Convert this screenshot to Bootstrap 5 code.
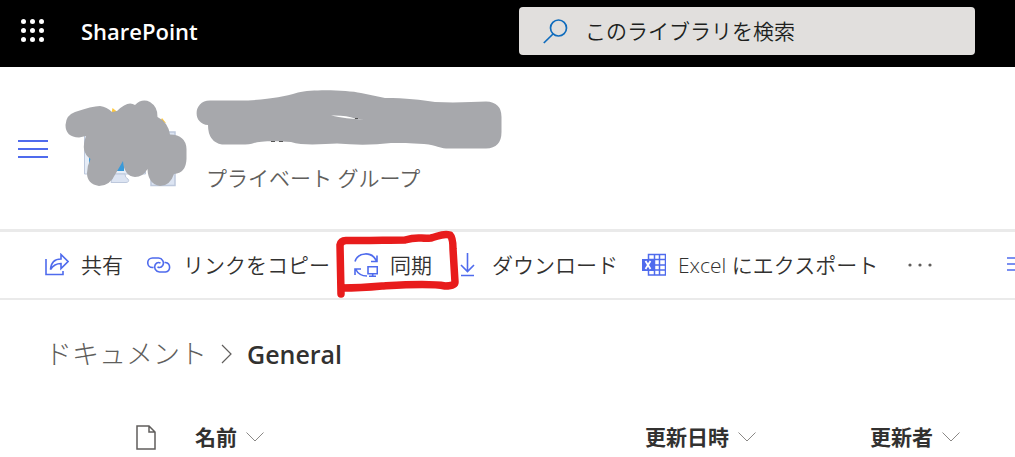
<!DOCTYPE html>
<html lang="ja">
<head>
<meta charset="utf-8">
<meta name="viewport" content="width=device-width, initial-scale=1">
<title>General - SharePoint</title>
<link href="https://cdn.jsdelivr.net/npm/bootstrap@5.3.0/dist/css/bootstrap.min.css" rel="stylesheet">
<style>
  body { font-family: "Open Sans", "Noto Sans CJK JP", sans-serif; font-size: 21px; line-height: 32px; color: #323130; background: #fff; overflow-x: hidden; }
  svg { display: block; flex: none; }
  button { font-weight: 350; }
  .plain { border: 0; padding: 0; background: none; color: inherit; white-space: nowrap; }
  .suite { background: #000; padding: 7px 40px 12px 20px; }
  .suite-name { font-size: 22px; font-weight: 600; color: #fff; margin-left: 36px; }
  .search-box { width: 456px; height: 48px; background: #e1dfdd; border-radius: 4px; padding: 0 24px; gap: 17px; }
  .search-box input { border: 0; background: none; outline: 0; padding: 0; min-width: 0; font-weight: 350; color: #201f1e; }
  .search-box input::placeholder { color: #201f1e; opacity: 1; }
  .site { padding: 21px 18px 35px; border-bottom: 3px solid #eaeaea; }
  .site-menu { margin-top: 52px; }
  .site-type { font-weight: 350; color: #605e5c; padding: 12px 0 0 10px; }
  .site-logo { margin: 10px 8px 0 16px; }
  .commands { height: 68px; padding-left: 45px; gap: 24px; border-bottom: 2px solid #eaeaea; }
  .commands button { display: flex; align-items: center; gap: 12px; flex: none; }
  .line-icon { fill: none; stroke: #4f6bed; stroke-width: 1.6; }
  .pen-box { position: absolute; left: -20px; top: -20px; z-index: 1; pointer-events: none; }
  .view-btn { width: 8px; overflow: hidden; }
  .crumbs { padding: 34px 45px 0; font-size: 27px; line-height: 40px; gap: 13px; }
  .crumbs a { font-weight: 300; color: #605e5c; }
  .crumbs strong { font-size: 25px; font-weight: 600; }
  .files { margin-top: 47px; table-layout: fixed; width: 100%; }
  .files th { padding: 0; font-weight: 700; white-space: nowrap; }
  .files button { font-weight: 700; display: flex; align-items: center; gap: 9px; }
  .col-icon { width: 195px; } .col-title { width: 450px; } .col-date { width: 225px; }
  .col-icon svg { margin-left: 136px; }
</style>
</head>
<body>
<header class="suite d-flex align-items-center">
  <button class="plain" aria-label="アプリ起動ツール">
    <svg width="25" height="25" viewBox="0 0 25 25" fill="#fff"><g id="dots"><circle cx="3.5" cy="2.500" r="2.5"/><circle cx="12.5" cy="2.500" r="2.5"/><circle cx="21.5" cy="2.500" r="2.5"/></g><use href="#dots" y="9"/><use href="#dots" y="18"/></svg>
  </button>
  <a href="#" class="suite-name text-decoration-none">SharePoint</a>
  <label class="search-box d-flex align-items-center ms-auto">
    <svg width="25" height="26" viewBox="0 0 25 26" fill="none" stroke="#0f6cbd" stroke-width="1.7"><circle cx="15.500" cy="10" r="8"/><path d="M10 16 .8 25"/></svg>
    <input type="search" class="flex-grow-1" placeholder="このライブラリを検索" aria-label="このライブラリを検索">
  </label>
</header>

<section class="site d-flex align-items-start">
  <button class="plain site-menu" aria-label="メニュー">
    <svg width="30" height="18" viewBox="0 0 30 18" stroke="#4f6bed" stroke-width="2"><path d="M0 1h30M0 9h30M0 17h30"/></svg>
  </button>
  <svg class="site-logo" width="124" height="92" viewBox="64 98 124 92" aria-hidden="true">
    <path d="M111 116l1.500-8 5 4zM160 122l2-4 4 5z" fill="#ffc83d"/>
    <path d="M84.500 135h61v39h-61z" fill="#e6edf7" stroke="#bdc8dc"/>
    <path d="M89 138h35v33H89z" fill="#3a9ad9"/>
    <path d="M113 174h12q0 4 3 5q2 3-2 3.500h-15z" fill="#dce4f2" stroke="#bdc8dc"/>
    <path d="M151 132h24v53.500h-24z" fill="#dce4f2" stroke="#bdc8dc" stroke-width="1.500"/>
    <path d="M65.500 125Q66 115 75 112Q92 106 100 106Q107 107 112 112L117 111Q128 100 135 105Q142 98 150 102Q158 107 157.500 117Q168 122 170 134.500Q186 135 186.500 149V159Q186 173 174 174Q170 186 160 186Q148 184 147.500 169Q143 177 135 177Q124 176 123 161L116 173Q110 186 99 186Q87 184 87 173Q87 166 90.500 159Q80 152 86 136L79 137.500Q65.500 137 65.500 125Z" fill="#a7a8ac"/>
  </svg>
  <div>
    <svg width="308" height="62" viewBox="195 88 308 62" aria-hidden="true">
      <path d="M209 100.500H247C270 99 282 97 297 92.500C312 89 346 90 360 93L384 98C405 98 420 100 434 102C454 103 472 102 485 101.500Q500.500 102 500.500 117V132Q500.500 148 485 148.500H445C438 148 437 145.500 423 144C409 143 399 143 390 143Q365 146 336 143.500C323 144 302 146 290 142C276 140.500 258 141 253 143Q249 144.500 240 144.500H221Q207 142 207 125C191 124 192 100.500 209 100.500Z" fill="#a7a8ac"/>
      <path d="M330 115.500Q345 115 354 118.500L363 119.500Q345 119 330 115.500Z" fill="#fff"/>
      <path d="M354 118.500h3M270 141.500h4M278 141.500h4" stroke="#555"/>
    </svg>
    <div class="site-type">プライベート グループ</div>
  </div>
</section>

<nav class="commands d-flex align-items-center" aria-label="コマンド">
  <button class="plain"><svg class="line-icon" width="24" height="24" viewBox="0 0 24 24"><path d="M1 6v15.500h17V18"/><path d="M5.500 16.500C6 9.500 10 6 16 6V1.500l7 7-7 7v-5C11 10.500 8 12.500 5.500 16.500Z"/></svg>共有</button>
  <button class="plain"><svg class="line-icon" width="24" height="24" viewBox="0 0 24 24"><path d="M6.500 14.500H5.500a4.700 4.700 0 0 1 0-9.500H11.500a5 5 0 0 1 4.200 7.500c-1.300 2-3.600 2.300-5.200 1.500"/><path d="M17.500 9.500h1a4.800 4.800 0 0 1 0 9.500H12.500a5 5 0 0 1-4.200-7.500c1.300-2 3.600-2.300 5.200-1.500"/></svg>リンクをコピー</button>
  <button class="plain position-relative">
    <svg class="line-icon" width="24" height="24" viewBox="0 0 24 24"><path d="M1 8.500C4-1 18-2 22.500 8M23 2.500v6h-6M1 22v-6h6M1.500 16c2 4 6 7 11.500 7M14 13.700h9.300v7H14zM18.700 21v2M15 23.400h7"/></svg>同期
    <svg class="pen-box" width="126" height="72" viewBox="334 230 126 72" fill="none" stroke="#e81c1c" stroke-width="7.500" stroke-linecap="round" stroke-linejoin="round" aria-hidden="true"><path d="M341 295L340 246Q341 241 347 241.500C370 242 385 241 405 241C418 237 420 240 431 239C439 237 443 234 450 236Q453 239 453 250L455 283Q455 287 445 287C430 284 400 286 382 287Q360 289 342 289"/></svg>
  </button>
  <button class="plain"><svg class="line-icon" width="24" height="24" viewBox="0 0 24 24"><path d="M11.500 0v18M5 12l6.500 6.500L18 12M5 22.500h13"/></svg>ダウンロード</button>
  <button class="plain"><svg width="24" height="24" viewBox="0 0 24 24"><path d="M6.500 1.500h17v20.500h-17zM12.500 1.500v20.500M17.500 1.500v20.500M7 6.500h16.500M7 12h16.500M7 17h16.500" fill="none" stroke="#4f6bed" stroke-width="1.500"/><path d="M0 6h12v12H0z" fill="#4f6bed"/><path d="M3.500 8l5 8M8.500 8l-5 8" stroke="#fff" stroke-width="1.800"/></svg>Excel にエクスポート</button>
  <button class="plain" aria-label="その他"><svg width="36" height="24" viewBox="0 0 36 24" fill="#605e5c"><circle cx="8" cy="12" r="1.600"/><circle cx="18" cy="12" r="1.600"/><circle cx="28" cy="12" r="1.600"/></svg></button>
  <button class="plain view-btn ms-auto" aria-label="表示オプション"><svg width="24" height="18" viewBox="0 0 24 18" stroke="#4f6bed" stroke-width="1.600"><path d="M0 2h24M0 8h24M0 14h24"/></svg></button>
</nav>

<main>
  <nav class="crumbs d-flex align-items-center" aria-label="階層リンク">
    <a href="#" class="text-decoration-none">ドキュメント</a>
    <svg width="14" height="20" viewBox="0 0 14 20" fill="none" stroke="#605e5c" stroke-width="1.200"><path d="M2 1l9 9-9 9"/></svg>
    <strong>General</strong>
  </nav>
  <table class="files">
    <thead><tr>
      <th class="col-icon" scope="col"><svg width="20" height="25" viewBox="0 0 20 25" fill="none" stroke="#605e5c" stroke-width="1.500" role="img" aria-label="種類"><path d="M1 1h12l6 6v17H1zM13 1v6h6"/></svg></th>
      <th class="col-title" scope="col"><button class="plain">名前<svg width="18" height="10" viewBox="0 0 18 10" fill="none" stroke="#8a8886"><path d="M.5.500 9 9 17.500.500"/></svg></button></th>
      <th class="col-date" scope="col"><button class="plain">更新日時<svg width="18" height="10" viewBox="0 0 18 10" fill="none" stroke="#8a8886"><path d="M.5.500 9 9 17.500.500"/></svg></button></th>
      <th scope="col"><button class="plain">更新者<svg width="18" height="10" viewBox="0 0 18 10" fill="none" stroke="#8a8886"><path d="M.5.500 9 9 17.500.500"/></svg></button></th>
    </tr></thead>
  </table>
</main>
<script src="https://cdn.jsdelivr.net/npm/bootstrap@5.3.0/dist/js/bootstrap.bundle.min.js"></script>
</body>
</html>
